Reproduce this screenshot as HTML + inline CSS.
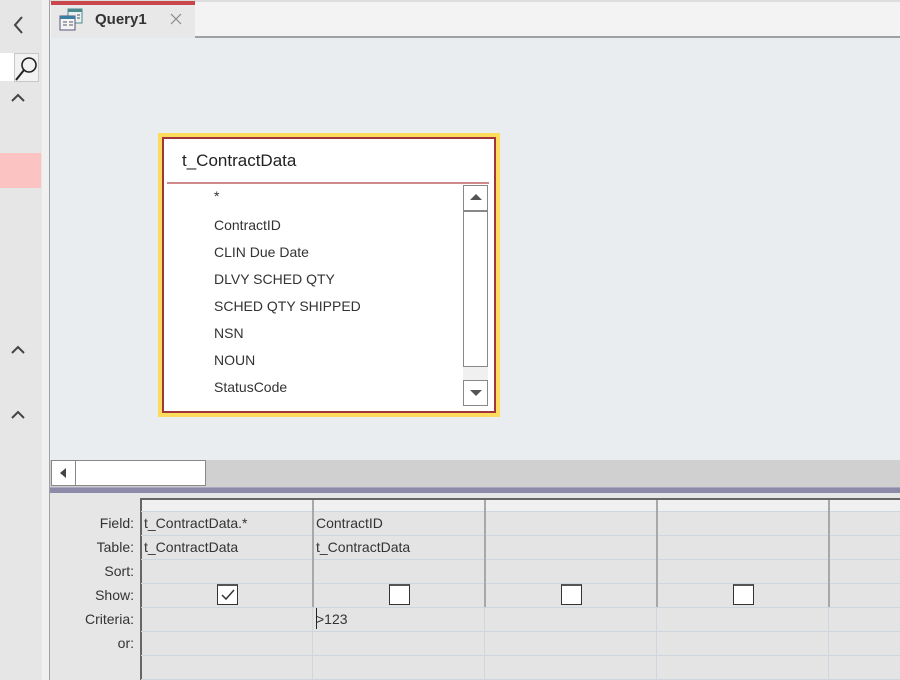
<!DOCTYPE html>
<html><head><meta charset="utf-8"><style>
*{margin:0;padding:0;box-sizing:border-box}
body{width:900px;height:680px;overflow:hidden;position:relative;background:#e6e6e6;font-family:"Liberation Sans",sans-serif;}
.a{position:absolute}
.lab{position:absolute;right:766px;font-size:14px;color:#333;text-align:right}
.cell{position:absolute;font-size:14px;color:#333}
.hl{position:absolute;left:141px;width:759px;height:1px;background:#cfd6e2}
.vd{position:absolute;top:500px;width:2px;height:107px;background:#a8a8a8}
.vl{position:absolute;top:607px;width:1px;height:73px;background:#cfd6e2}
.cb{position:absolute;top:584px;width:21px;height:21px;background:#fff;border:1px solid #333;border-top:2px solid #555}
.fld{position:absolute;left:214px;font-size:14px;color:#333}
</style></head><body>
<div class="a" style="left:0;top:0;width:42px;height:680px;background:#e6e6e6"></div>
<div class="a" style="left:42px;top:0;width:7px;height:680px;background:#f0f0f0"></div>
<div class="a" style="left:49px;top:0;width:1px;height:680px;background:#a0a0a0"></div>
<svg class="a" style="left:10px;top:14px" width="16" height="22"><path d="M12 3 L5 11 L12 19" fill="none" stroke="#444" stroke-width="2"/></svg>
<div class="a" style="left:0;top:53px;width:14px;height:28px;background:#fff"></div>
<div class="a" style="left:14px;top:53px;width:25px;height:29px;background:#f2f2f2;border:1px solid #c8c8c8"></div>
<svg class="a" style="left:14px;top:54px" width="26" height="28"><circle cx="15" cy="11" r="7" fill="none" stroke="#222" stroke-width="1.6"/><path d="M10 16 L2 26" stroke="#222" stroke-width="2"/></svg>
<svg class="a" style="left:10px;top:92px" width="16" height="12"><path d="M2 9 L8 3 L14 9" fill="none" stroke="#444" stroke-width="2"/></svg>
<div class="a" style="left:0;top:153px;width:41px;height:35px;background:#fcc3c3"></div>
<svg class="a" style="left:10px;top:344px" width="16" height="12"><path d="M2 9 L8 3 L14 9" fill="none" stroke="#444" stroke-width="2"/></svg>
<svg class="a" style="left:10px;top:409px" width="16" height="12"><path d="M2 9 L8 3 L14 9" fill="none" stroke="#444" stroke-width="2"/></svg>
<div class="a" style="left:50px;top:0;width:850px;height:38px;background:#f3f3f3"></div>
<div class="a" style="left:50px;top:0;width:850px;height:2px;background:#ddd"></div>
<div class="a" style="left:194px;top:36px;width:706px;height:2px;background:#a0a0a0"></div>
<div class="a" style="left:51px;top:1px;width:144px;height:37px;background:#e8e8e8"></div>
<div class="a" style="left:51px;top:1px;width:144px;height:4px;background:#c8474b"></div>
<svg class="a" style="left:59px;top:8px" width="26" height="24"><rect x="9" y="1" width="14" height="14" fill="#e8f0f0" stroke="#4b8a8e"/><rect x="9" y="1" width="14" height="3" fill="#4b8a8e"/><rect x="1" y="8" width="15" height="14" fill="#f4f4f4" stroke="#557"/><rect x="1" y="8" width="15" height="3" fill="#3a7ea4"/><path d="M4 14h4M4 17h4M10 14h4M10 17h4M18 7h3M18 10h3" stroke="#556" /></svg>
<div class="a" style="left:95px;top:11px;font-size:15px;font-weight:bold;color:#333">Query1</div>
<svg class="a" style="left:170px;top:13px" width="12" height="12"><path d="M1 1L11 11M11 1L1 11" stroke="#888" stroke-width="1.2"/></svg>
<div class="a" style="left:50px;top:38px;width:850px;height:422px;background:#eaedf0"></div>
<div class="a" style="left:158px;top:133px;width:342px;height:284px;background:#fddc5c"></div>
<div class="a" style="left:162px;top:137px;width:334px;height:276px;background:#fff;border:2px solid #a0363a"></div>
<div class="a" style="left:182px;top:151px;font-size:17px;color:#222">t_ContractData</div>
<div class="a" style="left:167px;top:182px;width:322px;height:2px;background:#d08a8a"></div>
<div class="fld" style="top:188px">*</div>
<div class="fld" style="top:217px">ContractID</div>
<div class="fld" style="top:244px">CLIN Due Date</div>
<div class="fld" style="top:271px">DLVY SCHED QTY</div>
<div class="fld" style="top:298px">SCHED QTY SHIPPED</div>
<div class="fld" style="top:325px">NSN</div>
<div class="fld" style="top:352px">NOUN</div>
<div class="fld" style="top:379px">StatusCode</div>
<div class="a" style="left:463px;top:185px;width:25px;height:220px;background:#f0f0f0"></div>
<div class="a" style="left:463px;top:185px;width:25px;height:26px;background:#fff;border:1px solid #888"></div>
<svg class="a" style="left:469px;top:193px" width="14" height="8"><path d="M1 7L7 1L13 7Z" fill="#555"/></svg>
<div class="a" style="left:463px;top:211px;width:25px;height:156px;background:#fff;border:1px solid #888"></div>
<div class="a" style="left:463px;top:380px;width:25px;height:26px;background:#fff;border:1px solid #888"></div>
<svg class="a" style="left:469px;top:389px" width="14" height="8"><path d="M1 1L7 7L13 1Z" fill="#555"/></svg>
<div class="a" style="left:50px;top:460px;width:850px;height:27px;background:#d0d0d0"></div>
<div class="a" style="left:51px;top:460px;width:25px;height:26px;background:#fff;border:1px solid #888"></div>
<svg class="a" style="left:59px;top:467px" width="8" height="12"><path d="M7 1L1 6L7 11Z" fill="#444"/></svg>
<div class="a" style="left:75px;top:460px;width:131px;height:26px;background:#fff;border:1px solid #888"></div>
<div class="a" style="left:50px;top:487px;width:850px;height:6px;background:#8c8aa8;border-top:1px solid #aaa8c0"></div>
<div class="a" style="left:50px;top:493px;width:850px;height:187px;background:#e6e6e6"></div>
<div class="a" style="left:140px;top:498px;width:760px;height:182px;background:#e4e4e4;border-top:2px solid #666;border-left:2px solid #666"></div>
<div class="a" style="left:142px;top:500px;width:758px;height:11px;background:#f0f0f0"></div>
<div class="hl" style="top:511px"></div><div class="hl" style="top:535px"></div><div class="hl" style="top:559px"></div><div class="hl" style="top:583px"></div><div class="hl" style="top:607px"></div><div class="hl" style="top:631px"></div><div class="hl" style="top:655px"></div><div class="hl" style="top:679px"></div>
<div class="vd" style="left:312px"></div><div class="vd" style="left:484px"></div><div class="vd" style="left:656px"></div><div class="vd" style="left:828px"></div>
<div class="vl" style="left:312px"></div><div class="vl" style="left:484px"></div><div class="vl" style="left:656px"></div><div class="vl" style="left:828px"></div>
<div class="lab" style="top:515px">Field:</div>
<div class="lab" style="top:539px">Table:</div>
<div class="lab" style="top:563px">Sort:</div>
<div class="lab" style="top:587px">Show:</div>
<div class="lab" style="top:611px">Criteria:</div>
<div class="lab" style="top:635px">or:</div>
<div class="cell" style="left:144px;top:515px">t_ContractData.*</div>
<div class="cell" style="left:144px;top:539px">t_ContractData</div>
<div class="cell" style="left:316px;top:515px">ContractID</div>
<div class="cell" style="left:316px;top:539px">t_ContractData</div>
<div class="cell" style="left:316px;top:611px">&gt;123</div>
<div class="a" style="left:316px;top:608px;width:1px;height:21px;background:#222"></div>
<div class="cb" style="left:217px"></div>
<svg class="a" style="left:219px;top:587px" width="18" height="16"><path d="M3 8L7 12L15 3" fill="none" stroke="#333" stroke-width="1.5"/></svg>
<div class="cb" style="left:389px"></div>
<div class="cb" style="left:561px"></div>
<div class="cb" style="left:733px"></div>
</body></html>
